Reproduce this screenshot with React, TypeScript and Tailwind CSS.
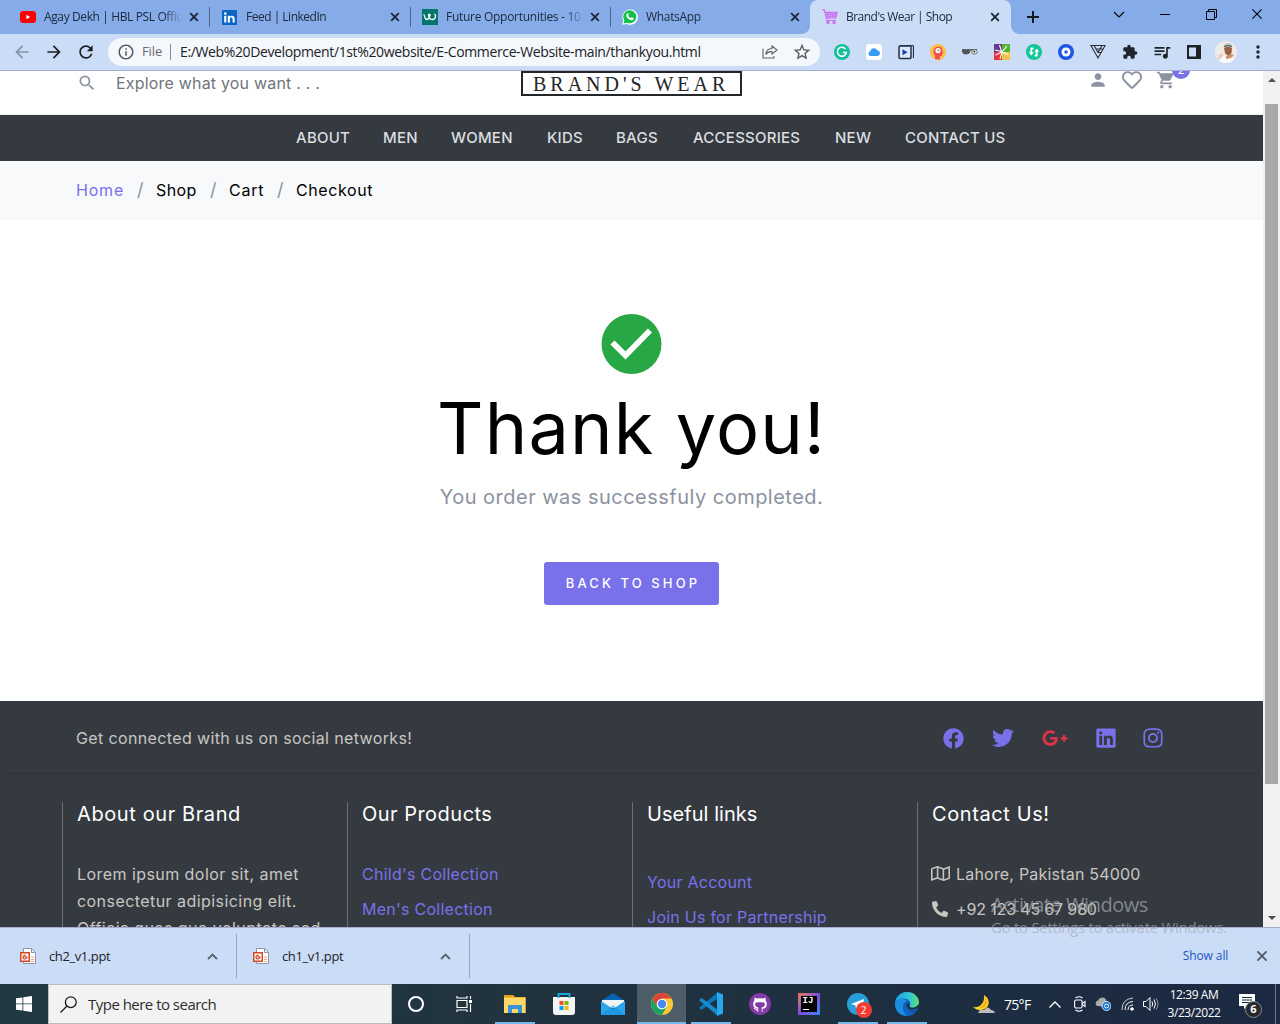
import { FaFacebook, FaTwitter, FaLinkedin, FaInstagram, FaPhoneAlt, FaRegMap, FaRegHeart } from 'react-icons/fa';
import { FaGooglePlusG } from 'react-icons/fa';
import { MdPerson, MdShoppingCart, MdSearch, MdExtension, MdArrowBack, MdArrowForward, MdRefresh, MdInfoOutline, MdQueueMusic, MdStarBorder, MdMoreVert } from 'react-icons/md';
import type { ReactNode } from 'react';

function YouTube() {
  return (
    <svg className="h-4 w-4" viewBox="0 0 16 16">
      <rect y="2" width="16" height="12" rx="3" fill="#f00" />
      <path d="M6.400 5.800v4.400L10.200 8z" fill="#fff" />
    </svg>
  );
}

function LinkedInMark() {
  return (
    <svg className="h-[15px] w-[15px]" viewBox="0 0 15 15">
      <rect width="15" height="15" rx="1" fill="#0a66c2" />
      <path d="M2.200 5.800h2.100v6.800H2.200zM5.800 5.800h2v1c1-1.600 4.900-1.700 4.900 1.900v3.900h-2.100V9c0-2-2.700-1.900-2.700 0v3.600H5.800z" fill="#fff" />
      <circle cx="3.300" cy="3.500" r="1.300" fill="#fff" />
    </svg>
  );
}

function Future() {
  return (
    <svg className="h-4 w-4" viewBox="0 0 16 16">
      <rect width="16" height="16" fill="#04756b" />
      <path d="M1.500 5.500c1.500 0 .8 5 3.200 5S7.500 8 8 6.500c.5-1.600-1.800-1.800-1.500 0 .3 2 1.500 4 3.700 4 3.500 0 4.300-4.500 2-5.500" fill="none" stroke="#fff" strokeWidth="1.300" />
    </svg>
  );
}

function WhatsApp() {
  return (
    <svg className="h-4 w-4" viewBox="0 0 16 16">
      <path d="M.3 15.700l1-4A7.700 7.700 0 1 1 4.600 15z" fill="#fff" />
      <path d="M1.600 14.500l.8-3A6.500 6.500 0 1 1 5 13.700z" fill="#12c04a" />
      <path d="M5.500 4.200c.6-.3.8 0 1 .7.5 1.100.3 1.200-.2 1.900.5 1.100 1.300 1.800 2.500 2.300.8-.8.9-1 1.500-.7 1.600.8 1.500.7 1.300 1.500-.5 1.500-2.300 1.500-3.800.8C5.900 9.900 4.600 8.400 4.300 7c-.2-1 .2-2.200 1.200-2.800z" fill="#fff" />
    </svg>
  );
}

function ShopCart() {
  return (
    <svg className="h-4 w-4" viewBox="0 0 16 16" fill="none" stroke="#c873f2" strokeWidth="1.200">
      <path d="M0 .9h2.300L5 11.500h9M3 3.400h12.300L13.800 9H4.400" />
      <path d="M3.700 5.200h11M4 7.200h10.400M6 3.400v5.500M8.300 3.400v5.500M10.700 3.400v5.500M13 3.400v5.500" />
      <circle cx="6" cy="13.400" r="1.100" fill="#c873f2" />
      <circle cx="12" cy="13.400" r="1.100" fill="#c873f2" />
    </svg>
  );
}

function Close({ className }: { className: string }) {
  return (
    <svg className={className} viewBox="0 0 10 10" fill="none" stroke="currentColor">
      <path d="M1.200 1.200l7.600 7.600M8.800 1.200L1.200 8.800" />
    </svg>
  );
}

function Tab({ icon, title, width, text, divider = true }: { icon: ReactNode; title: string; width: string; text: string; divider?: boolean }) {
  return (
    <div className={'relative flex h-full shrink-0 items-center ' + width}>
      {icon}
      <span className={'ml-2 w-[137px] shrink-0 overflow-hidden whitespace-nowrap text-[12px] leading-[18px] text-[#202b3c] [mask-image:linear-gradient(to_right,#000_120px,transparent_138px)] ' + text}>{title}</span>
      <Close className="ml-auto mr-[10px] h-[10px] w-[10px] shrink-0 stroke-[1.800] text-[#1d2433]" />
      {divider && <span className="h-5 w-px bg-[#50658a]" />}
    </div>
  );
}

function TabStrip() {
  return (
    <div className="flex h-[34px] bg-[#85ace9]">
      <div className="flex h-full pl-5">
        <Tab icon={<YouTube />} title="Agay Dekh | HBL PSL Official" width="w-[190px]" text="tracking-[-0.38px]" />
        <div className="w-3" />
        <Tab icon={<LinkedInMark />} title="Feed | LinkedIn" width="w-[189px]" text="pl-px tracking-[-0.5px]" />
        <div className="w-[11px]" />
        <Tab icon={<Future />} title="Future Opportunities - 101 jobs" width="w-[189px]" text="tracking-[-0.28px]" />
        <div className="w-[11px]" />
        <Tab icon={<WhatsApp />} title="WhatsApp" width="w-[188px]" text="tracking-[-0.32px]" divider={false} />
      </div>
      <div className="relative h-full w-[201px] rounded-t-lg bg-[#cbdcf6] pl-3">
        <span className="absolute -left-2 bottom-0 h-2 w-2 bg-[radial-gradient(circle_at_0_0,transparent_7.500px,#cbdcf6_8px)]" />
        <span className="absolute -right-2 bottom-0 h-2 w-2 bg-[radial-gradient(circle_at_100%_0,transparent_7.500px,#cbdcf6_8px)]" />
        <Tab icon={<ShopCart />} title="Brand's Wear | Shop" width="w-[188px]" text="tracking-[-0.53px]" divider={false} />
      </div>
      <svg className="ml-4 mt-[11px] h-3 w-3" viewBox="0 0 12 12" stroke="#14181f" strokeWidth="2"><path d="M6 0v12M0 6h12" /></svg>
      <div className="ml-auto flex h-7 items-center pr-[17px] text-black">
        <svg className="mr-[35px] h-[7px] w-3" viewBox="0 0 12 7" fill="none" stroke="currentColor" strokeWidth="1.100"><path d="M1 1l5 5 5-5" /></svg>
        <div className="mr-9 h-px w-[10px] bg-black" />
        <svg className="mr-[34px] h-[11px] w-[11px]" viewBox="0 0 11 11" fill="none" stroke="currentColor"><path d="M.5 2.500h8v8h-8zM2.500 2.500v-2h8v8h-2" /></svg>
        <Close className="h-3 w-3 stroke-[0.900]" />
      </div>
    </div>
  );
}

function Extensions() {
  return (
    <div className="ml-[14px] flex items-center gap-4">
      <svg className="h-4 w-4" viewBox="0 0 16 16"><circle cx="8" cy="8" r="8" fill="#15bf9a" /><path d="M11.500 5A4.500 4.500 0 1 0 12.300 8.600H9" fill="none" stroke="#fff" strokeWidth="1.500" /></svg>
      <svg className="h-4 w-4" viewBox="0 0 16 16"><rect width="16" height="16" rx="3" fill="#fff" /><path d="M4 12a2.700 2.700 0 0 1 .3-5 3.800 3.800 0 0 1 7-.8A3 3 0 0 1 12 12z" fill="#389af5" /></svg>
      <svg className="h-4 w-4" viewBox="0 0 16 16"><path d="M2 1.500h12.500q1 0 1 1V14" fill="none" stroke="#24304a" strokeWidth="1.200" /><rect x="1" y="2" width="12" height="12.500" rx="1" fill="#dbe6f8" stroke="#24304a" strokeWidth="1.500" /><path d="M4.500 5.200v6L9.500 8.200z" fill="#173bb4" /></svg>
      <svg className="h-4 w-4" viewBox="0 0 16 16"><circle cx="8" cy="8" r="8" fill="#fdbf45" /><path d="M5 15.200v-3.700C2 8 3.500 2.500 8.500 2.500c3 0 4.500 3 4 5l.8 2-1.300.5v2h-2v3.500z" fill="#ef5350" /><circle cx="8" cy="6.600" r="2.600" fill="#fff" /><path d="M8 5v2h1.500" stroke="#888" fill="none" /></svg>
      <svg className="h-4 w-4" viewBox="0 0 16 16"><path d="M0 5.200h15v1.300H0z" fill="#454545" /><path d="M0 6h8v2.500q-1 2-4 2T0 8z" fill="#555" /><ellipse cx="12.500" cy="7.800" rx="2.800" ry="2.300" fill="#eee" stroke="#555" strokeWidth=".8" /><circle cx="12.300" cy="7.500" r=".9" fill="#222" /></svg>
      <svg className="h-4 w-4" viewBox="0 0 16 16"><path d="M0 0h8v8H0z" fill="#63398b" /><path d="M8 0h8v8H8z" fill="#54b434" /><path d="M0 8h8v8H0z" fill="#e53538" /><path d="M8 8h8v8H8z" fill="#f3c44c" /><path d="M5.500 1L7.500 7.500 1 6M8 8l5-6M8 8l6 2.500M8 8L6 15M8 8L1.500 11" stroke="#fff" strokeWidth="1.100" fill="none" /></svg>
      <svg className="h-4 w-4" viewBox="0 0 16 16"><circle cx="8" cy="8" r="8" fill="#12c795" /><path d="M7.500 4.500H5.300V9M8.500 11.500h2.200V7" fill="none" stroke="#fff" strokeWidth="1.800" /><path d="M2.800 8.300h5L5.300 11.500zM8.200 7.700h5L10.700 4.500z" fill="#fff" /></svg>
      <svg className="h-4 w-4" viewBox="0 0 16 16"><circle cx="8" cy="8" r="8" fill="#1c55e8" /><circle cx="8" cy="8" r="4.500" fill="#fff" /><circle cx="8" cy="8" r="1.700" fill="#1c55e8" /></svg>
      <svg className="h-4 w-4" viewBox="0 0 16 16" fill="none" stroke="#262b34" strokeWidth="1.100"><path d="M.9 1.500h14.200L8 14zM4 1.500L8 8.500h2.800M12 1.500L8 8.500M6 5h7" /></svg>
      <MdExtension className="h-4 w-4 text-[#20242b]" />
      <MdQueueMusic className="-mx-0.5 h-[20px] w-[20px] text-[#20242b]" />
      <svg className="h-4 w-4" viewBox="0 0 16 16"><path d="M1 1h14v14H1z" fill="#202124" /><path d="M3 3.500h7v9H3z" fill="#cbdcf6" /></svg>
    </div>
  );
}

function Avatar() {
  return (
    <svg className="ml-[13px] h-[22px] w-[22px] rounded-full" viewBox="0 0 22 22">
      <rect width="22" height="22" fill="#f1ebe8" />
      <path d="M4 22q1-7 8-8 7 2 7 8z" fill="#fbfbfa" />
      <path d="M9 7q4-3 8 0l-.5 5q-3 5-6.500 0z" fill="#9a6046" />
      <path d="M8.500 6.500q0-4 4.500-4.500t4.500 4.500l-4.500-1z" fill="#b5cfc4" />
      <path d="M9 5.500q4-2 8 0" stroke="#4e403a" fill="none" />
      <path d="M11 15q5-3 8-1l-3 3-5 1z" fill="#cf8f6b" />
      <path d="M3 14l5-2v3l-4 4z" fill="#eccbc5" />
    </svg>
  );
}

function Toolbar() {
  return (
    <div className="flex h-[37px] items-center border-b border-[#a3aed0] bg-[#cbdcf6]">
      <MdArrowBack className="ml-3 h-5 w-5 text-[#8591a9]" />
      <MdArrowForward className="ml-3 h-5 w-5 text-[#1c2027]" />
      <MdRefresh className="ml-3 h-5 w-5 text-[#1c2027]" />
      <div className="ml-3 flex h-7 w-[712px] items-center rounded-full bg-[#f4f8fd] pl-[9px] text-[14px]">
        <MdInfoOutline className="h-[18px] w-[18px] text-[#55585d]" />
        <span className="ml-[7px] w-[22px] text-[13px] tracking-[-0.1px] text-[#686c72]">File</span>
        <span className="ml-[6px] h-4 w-px bg-[#868b94]" />
        <span className="ml-[9px] whitespace-nowrap pb-0.5 tracking-[-0.37px] text-[#202124]">E:/Web%20Development/1st%20website/E-Commerce-Website-main/thankyou.html</span>
        <svg className="ml-auto h-[14px] w-4" viewBox="0 0 16 14" fill="none" stroke="#5f6368" strokeWidth="1.100"><path d="M1 3.500v9.500h11v-2M10 1l5 4-5 4V6.700C7 6.500 5 7.500 3.800 9.500 4 6 6.500 3.700 10 3.500z" /></svg>
        <MdStarBorder className="ml-[14px] mr-2 h-5 w-5 text-[#55585d]" />
      </div>
      <Extensions />
      <Avatar />
      <MdMoreVert className="ml-[11px] h-5 w-5 text-[#20242b]" />
    </div>
  );
}

const navItems = [
  { label: 'ABOUT', box: 'w-[87px]' },
  { label: 'MEN', box: 'w-[68px]' },
  { label: 'WOMEN', box: 'w-[96px]' },
  { label: 'KIDS', box: 'w-[69px]' },
  { label: 'BAGS', box: 'w-[77px]' },
  { label: 'ACCESSORIES', box: 'w-[142px]' },
  { label: 'NEW', box: 'w-[70px]' },
  { label: 'CONTACT US', box: 'w-[104px]' },
];

function SiteHeader() {
  return (
    <>
      <div className="relative h-11 overflow-hidden border-b border-[#eceff1] bg-white">
        <div className="flex h-6 items-center pl-[77px] pr-[73px] text-[#8c92a0]">
          <MdSearch className="h-5 w-5 shrink-0" />
          <span className="ml-[19px] w-[405px] whitespace-nowrap text-[16px] tracking-[0.19px] text-[#6f757d]">Explore what you want . . .</span>
          <div className="h-[25px] w-[221px] self-start border-2 border-[#25262a] pl-[10px] font-['Liberation_Serif'] text-[20px] leading-[22px] tracking-[4px] text-[#25262a]">
            <span className="whitespace-nowrap">BRAND'S WEAR</span>
          </div>
          <MdPerson className="ml-auto mt-[-7px] h-5 w-5" />
          <FaRegHeart className="ml-[14px] mt-[-7px] h-5 w-5" />
          <div className="relative ml-[14px] mt-[-7px] w-[34px]">
            <MdShoppingCart className="h-5 w-5" />
            <span className="absolute -top-[9px] right-0 h-[18px] w-[18px] rounded-full bg-[#7971ea] text-center text-[11px] leading-[18px] text-white">2</span>
          </div>
        </div>
      </div>
      <nav className="flex h-[46px] items-center bg-[#343a40] pl-[296px] text-[15px] font-medium tracking-[0.25px] text-[#dcdee0]">
        {navItems.map((n) => (
          <a key={n.label} className={'shrink-0 whitespace-nowrap ' + n.box}>{n.label}</a>
        ))}
      </nav>
    </>
  );
}

function Breadcrumb() {
  return (
    <div className="flex h-[59px] items-center bg-[#f8f9fa] pb-0.5 pl-[76px] text-[16px] text-black">
      <span className="w-[61px] tracking-[0.8px] text-[#7971ea]">Home</span>
      <span className="w-[19px] text-[18px] text-[#8c92a0]">/</span>
      <span className="w-[54px] tracking-[0.4px]">Shop</span>
      <span className="w-[19px] text-[18px] text-[#8c92a0]">/</span>
      <span className="w-12 tracking-[0.8px]">Cart</span>
      <span className="w-[19px] text-[18px] text-[#8c92a0]">/</span>
      <span className="tracking-[0.6px]">Checkout</span>
    </div>
  );
}

function ThankYou() {
  return (
    <main className="flex h-[481px] flex-col items-center bg-white pt-[94px]">
      <svg className="h-[61px] w-[61px]" viewBox="0 0 61 61"><circle cx="30.500" cy="30" r="30" fill="#28a745" /><path d="M11.500 28.500L24.500 41.500L49 16.500" fill="none" stroke="#fff" strokeWidth="5.800" /></svg>
      <h1 className="mt-[11px] whitespace-nowrap text-[72px] leading-[84px] tracking-[1.150px] text-black">Thank you!</h1>
      <p className="mt-3 whitespace-nowrap text-[20px] leading-[30px] tracking-[0.480px] text-[#8c92a0]">You order was successfuly completed.</p>
      <button className="mt-[50px] h-[43px] w-[175px] whitespace-nowrap rounded-[3px] bg-[#7971ea] pl-[3px] text-[13px] font-medium tracking-[3.100px] text-white">BACK TO SHOP</button>
    </main>
  );
}

function Column({ title, tracking, children }: { title: string; tracking: string; children: ReactNode }) {
  return (
    <section className="h-[126px] w-[285px] shrink-0 border-l border-[#6a6f75] pl-[14px]">
      <h2 className={'h-[59px] whitespace-nowrap text-[20px] leading-[25px] text-white ' + tracking}>{title}</h2>
      {children}
    </section>
  );
}

function Footer() {
  return (
    <footer className="h-[226px] overflow-hidden bg-[#343a40] text-[16px] text-[#c9c6c2]">
      <div className="mx-1 flex h-[73px] items-center border-b border-[#2d3238] pl-[72px] pt-0.5 text-[#7971ea]">
        <span className="w-[867px] tracking-[0.370px] text-[#c9c6c2]">Get connected with us on social networks!</span>
        <FaFacebook className="h-[21px] w-[21px]" />
        <FaTwitter className="ml-7 h-[22px] w-[22px]" />
        <FaGooglePlusG className="ml-7 h-[26px] w-[26px] text-[#dc3545]" />
        <FaLinkedin className="ml-[27px] h-[22px] w-[22px]" />
        <FaInstagram className="ml-[25px] h-[22px] w-[22px]" />
      </div>
      <div className="flex pl-[62px] pt-7">
        <Column title="About our Brand" tracking="tracking-[0.600px]">
          <p className="w-[262px] whitespace-pre leading-[27px] tracking-[0.440px]">{"Lorem ipsum dolor sit, amet\nconsectetur adipisicing elit.\nOfficia quas quo voluptate sed"}</p>
        </Column>
        <Column title="Our Products" tracking="tracking-[0.480px]">
          <p className="-mt-1 whitespace-pre leading-[35px] tracking-[0.260px] text-[#7971ea]">{"Child's Collection\nMen's Collection"}</p>
        </Column>
        <Column title="Useful links" tracking="tracking-[0.050px]">
          <p className="mt-1 whitespace-pre leading-[35px] tracking-[0.250px] text-[#7971ea]">{"Your Account\nJoin Us for Partnership"}</p>
        </Column>
        <Column title="Contact Us!" tracking="tracking-[0.600px]">
          <div className="-mt-[5px] flex h-[35px] items-center whitespace-nowrap tracking-[0.200px]"><FaRegMap className="-ml-px mr-[6px] h-[19px] w-[19px]" />Lahore, Pakistan 54000</div>
          <div className="flex h-[35px] items-center whitespace-nowrap tracking-[-0.150px]"><FaPhoneAlt className="mr-2 h-4 w-4" />+92 123 45 67 980</div>
        </Column>
      </div>
    </footer>
  );
}

function PageScrollbar() {
  return (
    <div className="flex w-[17px] flex-col items-center bg-[#f1f1f1]">
      <svg className="mt-[6px] h-[5px] w-2" viewBox="0 0 8 5"><path d="M0 5l4-4 4 4z" fill="#505050" /></svg>
      <div className="mt-[22px] h-[680px] w-[13px] bg-[#a8a8a8]" />
      <svg className="mb-[6px] mt-auto h-[5px] w-2" viewBox="0 0 8 5"><path d="M0 0l4 4 4-4z" fill="#505050" /></svg>
    </div>
  );
}

function Download({ name, width }: { name: string; width: string }) {
  return (
    <div className={'flex h-11 items-center border-r border-[#94a5c1] ' + width}>
      <svg className="h-4 w-4" viewBox="0 0 16 16"><path d="M3.500.5h8l4 4v11h-12z" fill="#fff" stroke="#8e95a6" /><path d="M11.500.5v4h4" fill="none" stroke="#8e95a6" /><path d="M11 9h3M11 11.500h3M11 13.500h3" stroke="#f1a17d" /><path d="M0 4h10v10H0z" fill="#d24726" /><path d="M1.500 5.500h7v7h-7z" fill="#fff" /><path d="M5 7a2 2 0 1 0 2 2H5z" fill="none" stroke="#d24726" strokeWidth="1.200" /></svg>
      <span className="ml-[13px] pt-0.5 text-[13px] tracking-[-0.400px] text-[#20242b]">{name}</span>
      <svg className="ml-auto mr-[18px] h-[7px] w-[11px]" viewBox="0 0 11 7" fill="none" stroke="#5b6370" strokeWidth="1.800"><path d="M1 6l4.500-4.500L10 6" /></svg>
    </div>
  );
}

function Downloads() {
  return (
    <div className="flex h-[57px] items-center border-t border-[#a3aed0] bg-[#cbdcf6] pl-5">
      <Download name="ch2_v1.ppt" width="w-[217px]" />
      <div className="w-4" />
      <Download name="ch1_v1.ppt" width="w-[217px]" />
      <div className="ml-auto flex h-8 w-[79px] items-center justify-center rounded border border-[#d2dff2] pb-px text-[12px] font-medium tracking-[-0.100px] text-[#1d56c4]">Show all</div>
      <Close className="ml-[11px] mr-[12px] h-3 w-3 stroke-[1.600] text-[#555d69]" />
    </div>
  );
}

function Chrome() {
  return (
    <svg className="h-6 w-6" viewBox="0 0 24 24"><circle cx="12" cy="12" r="11" fill="#fbc934" /><path d="M2.500 6.500A11 11 0 0 1 21.500 6.500H12L7.200 14.700z" fill="#dc4437" /><path d="M2.500 6.500A11 11 0 0 0 12 23l4.700-8.300-4.700-2.700-4.700 2.700z" fill="#1ca261" /><circle cx="12" cy="12" r="5.300" fill="#fff" /><circle cx="12" cy="12" r="4.200" fill="#4688f4" /></svg>
  );
}

function Edge() {
  return (
    <svg className="h-6 w-6" viewBox="0 0 24 24">
      <defs><linearGradient id="edgeTop"><stop stopColor="#1b9de2" /><stop offset=".6" stopColor="#32c6d4" /><stop offset="1" stopColor="#5de16a" /></linearGradient></defs>
      <circle cx="12" cy="12" r="12" fill="#0d63bd" />
      <path d="M0 11C1 4 6 0 12 0c7 0 12 5 12 10 0 4-3 6-6 6-2 0-4-1-3.200-2.400C17 10 13 6.500 9 6.500c-4 0-8 2-9 4.500z" fill="url(#edgeTop)" />
      <path d="M0 12c1-5 8-7 12-3-5 2-6 9 0 14.800C5 24 0 19 0 12z" fill="#1c8de0" />
      <path d="M12 9c-3 3-1 9 5 9 3 0 5-1 6-2l1-4v10h-3C14 20 9 16 12 9z" fill="#0c4e9d" opacity=".5" />
      <path d="M11.500 12c-.5 5 5 7.500 11.500 3.500l-.8 1.700 1.800 1V12l-1 1c-1.500 2.500-7 4-8.500 1.500-.5-1 .5-1.500.2-3z" fill="#1f2f3e" />
      <path d="M21 19h3v5h-7q3-2 4-5z" fill="#1f2f3e" />
    </svg>
  );
}

function Task({ children, open, active }: { children: ReactNode; open?: boolean; active?: boolean }) {
  return (
    <div className={'flex h-10 w-[49px] flex-col items-center ' + (active ? 'bg-[#4e5e68]' : '')}>
      <div className="flex h-[38px] items-center pt-0.5">{children}</div>
      {open && <div className={'h-0.5 bg-[#76b9ed] ' + (active ? 'w-full' : 'w-10')} />}
    </div>
  );
}

function Tray() {
  return (
    <div className="ml-auto flex h-10 items-center text-white">
      <svg className="h-5 w-[23px]" viewBox="0 0 23 20"><path d="M12 1c7 4 6 13-1 14.500C6 17 3 15 1 13c6 1 12-3 11-12z" fill="#fbd21e" /><path d="M12 1c3 5 1 11-5 13 7 0 10-6 5-13z" fill="#f19b25" /><path d="M6 19q2-5 6-3 4-5 7 0 3 0 4 3z" fill="#c1b8b8" /></svg>
      <span className="ml-[9px] w-[30px] whitespace-nowrap text-[14px] tracking-[-0.700px]">75°F</span>
      <svg className="ml-[15px] h-[7px] w-3" viewBox="0 0 12 7" fill="none" stroke="currentColor" strokeWidth="1.300"><path d="M.5 6.500L6 1l5.500 5.500" /></svg>
      <svg className="ml-[13px] h-4 w-3" viewBox="0 0 12 16" fill="none" stroke="currentColor" strokeWidth="1.100"><rect x=".6" y="4" width="7.500" height="8" rx="1.500" /><path d="M8.200 7.500l2.800-2v5l-2.800-2M1.500 2q3.500-2.500 7 0M1.500 14q3.500 2.500 7 0" /></svg>
      <svg className="ml-[9px] h-[14px] w-4" viewBox="0 0 16 14"><path d="M2 9a3 3 0 0 1 1-5.500C5-1 11 0 11.500 4L14 6v4z" fill="#aaa" /><circle cx="11.500" cy="9" r="4.500" fill="#1775cf" stroke="#fff" strokeWidth=".8" /><path d="M9 8.500q2.500-3 5 0M14 9.500q-2.500 3-5 0" stroke="#fff" fill="none" /></svg>
      <svg className="ml-[10px] h-[14px] w-[14px]" viewBox="0 0 14 14" fill="none" stroke="currentColor"><path d="M1 13Q1 2 12 1" opacity=".75" /><path d="M4 13Q4 5 12 4.500M7 13q0-5 5-5" /><circle cx="11" cy="12" r="1.300" fill="currentColor" /></svg>
      <svg className="ml-[8px] h-[14px] w-4" viewBox="0 0 16 14" fill="none" stroke="currentColor"><path d="M.5 4.500H3l4-4v13l-4-4H.5zM9 4.500q1.500 2.500 0 5M11 2.500q3 4.500 0 9" /><path d="M13 1q4 6 0 12" opacity=".5" /></svg>
      <div className="ml-2 w-[54px] whitespace-nowrap text-center text-[12px] leading-[18px] tracking-[-0.420px]">12:39 AM<br />3/23/2022</div>
      <div className="relative ml-[17px] mr-[13px] h-6 w-6">
        <svg className="h-[18px] w-[18px]" viewBox="0 0 18 18"><path d="M1 2h16v12h-8l-3 3v-3H1z" fill="#fff" /><path d="M4 5.500h10M4 8h10M4 10.500h7" stroke="#1d2c40" /></svg>
        <span className="absolute -bottom-0.5 right-0 flex h-[17px] w-[17px] items-center justify-center rounded-full border border-[#85888d] bg-[#26292e] text-[11px] font-bold">6</span>
      </div>
      <div className="h-10 w-px bg-[#6b7785]" />
      <div className="w-1" />
    </div>
  );
}

function Taskbar() {
  return (
    <div className="flex h-10 items-center bg-linear-to-r from-[#213840] via-[#20323f] to-[#1b2942]">
      <div className="flex w-12 justify-center">
        <svg className="h-4 w-4" viewBox="0 0 16 16" fill="#fff"><path d="M0 2.300L6.500 1.400V7.500H0zM7.300 1.300L16 0v7.500H7.300zM0 8.300h6.500v6.300L0 13.700zM7.300 8.300H16V16l-8.700-1.300z" /></svg>
      </div>
      <div className="flex h-10 w-[344px] items-center border border-[#bcbcbc] bg-[#f2f2f2] pl-[11px]">
        <svg className="h-[17px] w-[17px]" viewBox="0 0 17 17" fill="none" stroke="#1b1b1b" strokeWidth="1.300"><circle cx="10.800" cy="6.200" r="5.400" /><path d="M7 10L.5 16.500" /></svg>
        <span className="ml-[11px] text-[15px] tracking-[-0.520px] text-[#2e2e2e]">Type here to search</span>
      </div>
      <div className="flex">
        <Task><div className="-ml-0.5 h-4 w-4 rounded-full border-[2.500px] border-white" /></Task>
        <Task><svg className="-ml-0.5 h-4 w-[17px]" viewBox="0 0 17 16" fill="none" stroke="#fff" strokeWidth="1.200"><path d="M1 4.500h10v7H1zM1 0v2h10V0M1 16v-2h10v2M14.500 0v3M14.500 8v8" /><path d="M13 4h3v3h-3z" fill="#fff" stroke="none" /></svg></Task>
        <Task open><svg className="h-5 w-[22px]" viewBox="0 0 22 20"><path d="M0 1h9l2 2h10.500v16H0z" fill="#f0b52d" /><path d="M0 4h21.500v15H0z" fill="#ffd968" /><path d="M0 1h9v2H0z" fill="#e79c11" /><path d="M4 11h14v8h-4v-4H8v4H4z" fill="#3594da" /></svg></Task>
        <Task><svg className="h-6 w-6" viewBox="0 0 24 24"><path d="M1 5h22v15q0 3-3 3H4q-3 0-3-3z" fill="#f4f4f4" /><path d="M6.500 6V2h11v4" fill="none" stroke="#19a7e4" strokeWidth="1.800" /><path d="M7.500 9h4v4h-4z" fill="#f25022" /><path d="M12.500 9h4v4h-4z" fill="#7fba00" /><path d="M7.500 14h4v4h-4z" fill="#00a4ef" /><path d="M12.500 14h4v4h-4z" fill="#ffb900" /></svg></Task>
        <Task><svg className="h-[22px] w-6" viewBox="0 0 24 22"><path d="M0 8l12-8 12 8z" fill="#0863b4" /><path d="M1 7h22v8H1z" fill="#f1f5f8" /><path d="M0 8l12 8 12-8v14H0z" fill="#26a8ea" /><path d="M0 22l12-10 12 10z" fill="#1688dc" opacity=".5" /></svg></Task>
        <Task open active><Chrome /></Task>
        <Task open><svg className="h-6 w-6" viewBox="0 0 24 24"><path d="M0 16l2.500 2L19 6V0L1 15z" fill="#0877b9" /><path d="M0 8l2.500-2L19 18v6L1 9z" fill="#118dd0" /><path d="M18 0l6 2.500v19L18 24z" fill="#29a9ed" /></svg></Task>
        <Task><svg className="h-[22px] w-[22px]" viewBox="0 0 22 22"><circle cx="11" cy="11" r="11" fill="#813ba5" /><path d="M8.500 19v-3.200c-3 0-4.300-1.800-4.300-5 0-1.500.4-2.500 1.200-3.300L5.400 4.500 8 5.600q3-.8 6 0l2.600-1.100V7.500c.8.8 1.200 1.800 1.200 3.300 0 3.200-1.300 5-4.300 5V19z" fill="#fff" /><path d="M8 14.200c-2.500-1-2.500-5 0-5h6c2.500 0 2.500 4 0 5h-1.300V19H9.300v-4.800z" fill="#813ba5" /><path d="M9 17H7l-2-2" stroke="#fff" fill="none" /></svg></Task>
        <Task><div className="bg-linear-to-br from-[#f66b3e] via-[#7a4ad8] to-[#1686ff] p-[3px]"><div className="flex h-4 w-4 flex-col bg-black pl-0.5 font-['Liberation_Mono'] text-[9px] font-bold leading-[10px] text-white">IJ<span className="mt-[3px] h-px w-[6px] bg-white" /></div></div></Task>
        <Task open><div className="relative"><svg className="h-[22px] w-[22px]" viewBox="0 0 22 22"><circle cx="11" cy="11" r="11" fill="#289fd9" /><path d="M4 11l13-5-2 11-4-3-2 2-.5-3.500z" fill="#fff" /></svg><span className="absolute -bottom-[3px] -right-[3px] flex h-4 w-4 items-center justify-center rounded-full bg-[#f23c34] text-[10px] text-white">2</span></div></Task>
        <Task open><Edge /></Task>
      </div>
      <Tray />
    </div>
  );
}

export default function App() {
  return (
    <div className="relative h-[1024px] w-[1280px] overflow-hidden bg-white font-['Open_Sans','Noto_Sans',sans-serif]">
      <TabStrip />
      <Toolbar />
      <div className="flex h-[856px]">
        <div className="w-[1263px] shrink-0 overflow-hidden font-['Inter',sans-serif]">
          <SiteHeader />
          <Breadcrumb />
          <ThankYou />
          <Footer />
        </div>
        <PageScrollbar />
      </div>
      <Downloads />
      <Taskbar />
      <div className="pointer-events-none absolute left-[991px] top-[892px] whitespace-nowrap text-[#a7acb4]/70">
        <div className="text-[20px] leading-[26px] tracking-[-0.450px]">Activate Windows</div>
        <div className="text-[15px] leading-[19px] tracking-[-0.280px]">Go to Settings to activate Windows.</div>
      </div>
    </div>
  );
}
